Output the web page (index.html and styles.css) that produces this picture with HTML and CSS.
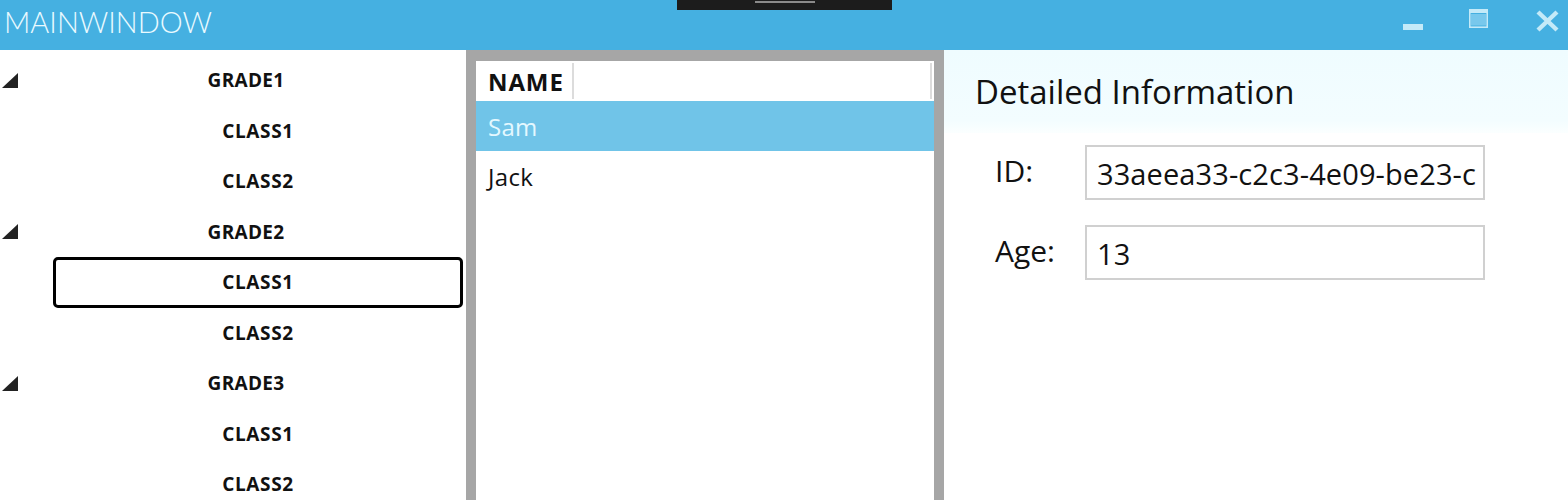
FILE: index.html
```html
<!DOCTYPE html>
<html>
<head>
<meta charset="utf-8">
<link rel="stylesheet" href="styles.css">
</head>
<body>
<div class="app">
  <header class="titlebar">
    <div class="title">MAINWINDOW</div>
    <div class="winbtns">
      <svg class="wb" width="26" height="26" viewBox="0 0 26 26"><rect x="0" y="16" width="20" height="6" fill="#c4eaf8"/></svg>
      <svg class="wb" width="26" height="26" viewBox="0 0 26 26"><rect x="0.8" y="1.8" width="17.4" height="17.4" fill="none" stroke="#c4eaf8" stroke-width="1.6"/><rect x="0" y="1" width="19" height="4" fill="#c4eaf8"/><rect x="2" y="6" width="15" height="11.5" fill="#78c8ec"/></svg>
      <svg class="wb" width="26" height="26" viewBox="0 0 26 26"><path d="M3 4 L22 22 M22 4 L3 22" stroke="#c4eaf8" stroke-width="4.4" stroke-linecap="butt"/></svg>
    </div>
    <div class="devbar"><span class="devline"></span></div>
  </header>
  <div class="main">
    <nav class="tree">
      <div class="grade"><span class="exp"></span><span class="glabel">GRADE1</span></div>
      <div class="cls"><span class="clabel">CLASS1</span></div>
      <div class="cls"><span class="clabel">CLASS2</span></div>
      <div class="grade"><span class="exp"></span><span class="glabel">GRADE2</span></div>
      <div class="cls selected"><span class="clabel">CLASS1</span></div>
      <div class="cls"><span class="clabel">CLASS2</span></div>
      <div class="grade"><span class="exp"></span><span class="glabel">GRADE3</span></div>
      <div class="cls"><span class="clabel">CLASS1</span></div>
      <div class="cls"><span class="clabel">CLASS2</span></div>
    </nav>
    <section class="listwrap">
      <div class="list">
        <div class="lhead"><div class="hcol">NAME</div><div class="hrest"></div></div>
        <div class="lrow active">Sam</div>
        <div class="lrow">Jack</div>
      </div>
    </section>
    <section class="detail">
      <div class="dhead">Detailed Information</div>
      <div class="form">
        <div class="field"><label class="flabel">ID:</label><div class="tbox">33aeea33-c2c3-4e09-be23-c</div></div>
        <div class="field"><label class="flabel">Age:</label><div class="tbox">13</div></div>
      </div>
    </section>
  </div>
</div>
</body>
</html>
```
FILE: styles.css
```css
html, body { margin: 0; padding: 0; }
body {
  width: 1568px;
  height: 500px;
  overflow: hidden;
  background: #ffffff;
  font-family: "Open Sans", "Noto Sans", sans-serif;
  color: #111;
}
.app { display: flex; flex-direction: column; height: 500px; }

.titlebar {
  position: relative;
  height: 50px;
  flex: 0 0 50px;
  background: #45b0e1;
  display: flex;
  align-items: flex-start;
  justify-content: space-between;
}
.title {
  font-family: "Lato", "Open Sans", sans-serif;
  font-weight: 300;
  font-size: 29px;
  color: #eafaff;
  padding-left: 4px;
  line-height: 43px;
}
.winbtns { display: flex; gap: 40px; padding: 8px 7px 0 0; }
.wb { display: block; }

.devbar {
  position: absolute;
  left: 677px;
  top: 0;
  width: 215px;
  height: 10px;
  background: #1c1c1c;
  display: flex;
  justify-content: center;
}
.devline { width: 60px; height: 2px; margin-top: 1px; background: #8a8a8a; }

.main { display: flex; flex: 1; height: 450px; }

.tree { width: 466px; flex: 0 0 466px; padding-top: 5px; overflow: hidden; }
.grade { display: flex; align-items: center; height: 50.5px; }
.exp {
  flex: 0 0 auto;
  width: 0; height: 0;
  margin-left: 2px;
  border-style: solid;
  border-width: 0 0 15px 16px;
  border-color: transparent transparent #222 transparent;
}
.glabel {
  flex: 0 0 454px;
  width: 454px;
  margin-left: 1px;
  text-align: center;
  font-weight: 700;
  font-size: 19px;
  letter-spacing: 0.3px;
}
.cls {
  box-sizing: border-box;
  height: 50.5px;
  margin-left: 53px;
  width: 410px;
  display: flex;
  align-items: center;
  justify-content: center;
  border: 3px solid transparent;
  border-radius: 5px;
  font-weight: 700;
  font-size: 19px;
  letter-spacing: 0.6px;
}
.cls.selected { border-color: #000; }

.listwrap {
  width: 478px;
  flex: 0 0 478px;
  background: #a6a6a6;
  box-sizing: border-box;
  padding: 11px 10px 0 10px;
}
.list { background: #fff; height: 100%; }
.lhead { display: flex; height: 40px; align-items: stretch; }
.hcol {
  width: 84px;
  padding-left: 12px;
  font-weight: 700;
  font-size: 24px;
  letter-spacing: 0.9px;
  display: flex;
  align-items: center;
  border-right: 2px solid #dcdcdc;
  margin: 2px 0;
}
.hrest { flex: 1; border-right: 2px solid #dcdcdc; margin: 2px 2px 2px 0; }
.lrow {
  height: 50px;
  display: flex;
  align-items: center;
  padding-left: 12px;
  font-size: 24px;
  letter-spacing: 0.3px;
}
.lrow.active { background: #70c4e8; color: #e4f8ff; }

.detail { flex: 1; }
.dhead {
  height: 83px;
  background: linear-gradient(#effcff, #f3fdff 85%, #fbffff);
  padding-left: 31px;
  font-size: 33px;
  line-height: 84px;
  color: #111;
}
.form { padding: 12px 0 0 51px; display: flex; flex-direction: column; gap: 25px; }
.field { display: flex; align-items: center; }
.flabel { width: 90px; font-size: 30px; margin-top: -4px; }
.tbox {
  box-sizing: border-box;
  width: 400px;
  height: 55px;
  border: 2px solid #d0d0d0;
  padding: 0 10px;
  font-size: 29px;
  line-height: 53px;
  letter-spacing: 0.1px;
  white-space: nowrap;
  overflow: hidden;
}
```
